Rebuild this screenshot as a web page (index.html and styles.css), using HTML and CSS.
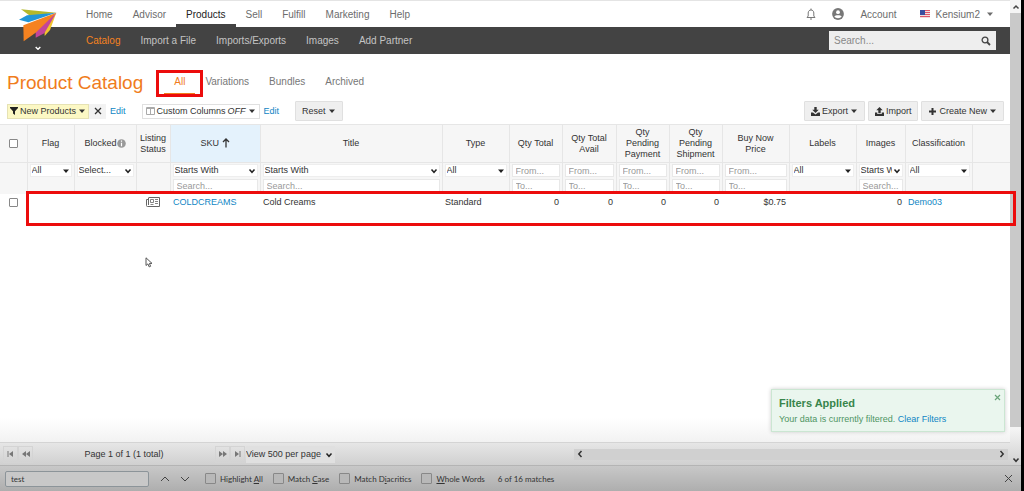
FILE: index.html
```html
<!DOCTYPE html>
<html lang="en">
<head>
<meta charset="utf-8">
<title>Product Catalog</title>
<link rel="stylesheet" href="styles.css">
</head>
<body>
<svg class="defs" width="0" height="0" aria-hidden="true">
  <symbol id="chev" viewBox="0 0 8 8"><path d="M1.5 2.5 4 5.3 6.5 2.5" fill="none" stroke="currentColor" stroke-width="1.5"/></symbol>
  <symbol id="tri" viewBox="0 0 8 8"><path d="M1 2.5h6L4 6z" fill="currentColor"/></symbol>
</svg>
<div class="window">
  <div class="viewport">
    <div class="app">
      <header class="header">
        <a class="logo" href="#" aria-label="Home">
          <svg viewBox="0 0 114 126" width="38" height="42">
            <path d="M6 4 112 14 34 24z" fill="#b3b82c"/>
            <path d="M0 35 24 22 112 14 28 43z" fill="#2196d8"/>
            <path d="M76 60 112 14 93 66 77 84z" fill="#f2c42c"/>
            <path d="M50 62 112 14 76 76 50 89z" fill="#c2459a"/>
            <path d="M13 52 112 14 50 74 14 100z" fill="#f58220"/>
            <path d="M50 117l7 7 7-7" fill="none" stroke="#fff" stroke-width="4"/>
          </svg>
        </a>
        <div class="bars">
          <div class="bar top">
            <nav class="nav">
              <a href="#">Home</a><a href="#">Advisor</a><a href="#" class="current">Products</a><a href="#">Sell</a><a href="#">Fulfill</a><a href="#">Marketing</a><a href="#">Help</a>
            </nav>
            <div class="user">
              <button type="button" aria-label="Notifications"><svg width="10" height="12" viewBox="0 0 10 12" fill="none" stroke="#777"><path d="M1 9.5h8L7.800 8V5c0-2-1.300-3-2.800-3S2.200 3 2.200 5v3zM5 .5V2M4 11h2"/></svg></button>
              <button type="button" aria-label="Profile"><svg width="12" height="12" viewBox="0 0 12 12"><circle cx="6" cy="6" r="5.900" fill="#777"/><circle cx="6" cy="4.200" r="1.900" fill="#fff"/><path d="M2.300 8.500C3.300 6.700 8.700 6.700 9.700 8.500 8 10.800 4 10.800 2.300 8.500z" fill="#fff"/></svg></button>
              <a href="#" class="account">Account</a>
              <button type="button" class="tenant"><svg width="10" height="8" viewBox="0 0 10 8"><path fill="#f2dede" d="M0 0h10v8H0z"/><path d="M0 .5h10M0 2.500h10M0 4.500h10M0 6.500h10" stroke="#e0566a"/><path fill="#3a4fa0" d="M0 0h5v5H0z"/></svg>Kensium2<svg width="8" height="8"><use href="#tri"/></svg></button>
            </div>
          </div>
          <div class="bar sub">
            <nav class="nav">
              <a href="#" class="current">Catalog</a><a href="#">Import a File</a><a href="#">Imports/Exports</a><a href="#">Images</a><a href="#">Add Partner</a>
            </nav>
            <form class="search"><input type="text" aria-label="Search" placeholder="Search..."><button type="button" aria-label="Search"><svg width="10" height="10" viewBox="0 0 10 10" fill="none" stroke="#444"><circle cx="4" cy="4" r="2.900" stroke-width="1.300"/><path d="m6 6 3 3" stroke-width="1.800"/></svg></button></form>
          </div>
        </div>
      </header>

      <div class="title-row">
        <h1>Product Catalog</h1>
        <nav class="tabs"><a href="#" class="current">All</a><a href="#">Variations</a><a href="#">Bundles</a><a href="#">Archived</a></nav>
      </div>

      <div class="toolbar">
        <div class="chip">
          <button type="button" class="filter"><svg width="8" height="8" viewBox="0 0 8 8"><path d="M0 0h8v1L5 4.300V8L3 6.500V4.300L0 1z" fill="#222"/></svg>New Products<svg width="8" height="8"><use href="#tri"/></svg></button><button type="button" class="clear" aria-label="Remove filter"><svg width="8" height="8" viewBox="0 0 8 8"><path d="m1 1 6 6M7 1 1 7" stroke="#333" stroke-width="1.300"/></svg></button>
        </div>
        <a href="#" class="edit">Edit</a>
        <button type="button" class="columns"><svg width="9" height="8" viewBox="0 0 9 8"><path d="M.5.5h8v7h-8zM4.500 1v6M1 1.500h7" fill="none" stroke="#aaa"/></svg>Custom Columns <i>OFF</i><svg width="8" height="8"><use href="#tri"/></svg></button>
        <a href="#" class="edit">Edit</a>
        <button type="button" class="btn reset">Reset<svg width="8" height="8"><use href="#tri"/></svg></button>
        <div class="actions">
          <button type="button" class="btn"><svg width="9" height="9" viewBox="0 0 9 9" fill="#333"><path d="M3.300 0h2.400v2.800h2L4.500 6 1.300 2.800h2zM0 5.500h2l2.500 2 2.500-2h2V9H0z"/></svg>Export<svg width="8" height="8"><use href="#tri"/></svg></button>
          <button type="button" class="btn"><svg width="9" height="9" viewBox="0 0 9 9" fill="#333"><path d="M3.300 6.200h2.400V3.300h2L4.500 0 1.300 3.300h2zM0 5.500h2.300V7h4.400V5.500H9V9H0z"/></svg>Import</button>
          <button type="button" class="btn"><svg width="9" height="9" viewBox="0 0 9 9"><path d="M4.500 1v7M1 4.500h7" stroke="#333" stroke-width="2"/></svg>Create New<svg width="8" height="8"><use href="#tri"/></svg></button>
        </div>
      </div>

      <main class="grid">
        <table>
          <colgroup><col class="c27"><col class="c47"><col class="c62"><col class="c34"><col class="c90"><col class="c182"><col class="c67"><col class="c53"><col class="c54"><col class="c53"><col class="c53"><col class="c67"><col class="c67"><col class="c49"><col class="c67"><col></colgroup>
          <thead>
            <tr class="heads">
              <th><input type="checkbox" aria-label="Select all"></th>
              <th>Flag</th>
              <th>Blocked<svg width="9" height="9" viewBox="0 0 9 9"><circle cx="4.500" cy="4.500" r="4.300" fill="#999"/><path d="M4.500 1.500v1.300M4.500 3.800v3.400" stroke="#fff" stroke-width="1.200"/></svg></th>
              <th>Listing Status</th>
              <th class="sorted">SKU <svg width="8" height="10" viewBox="0 0 8 10"><path d="M4 9.500V1M1 4l3-3 3 3" fill="none" stroke="#333" stroke-width="1.300"/></svg></th>
              <th>Title</th><th>Type</th><th>Qty Total</th><th>Qty Total Avail</th><th>Qty Pending Payment</th><th>Qty Pending Shipment</th><th>Buy Now<br>Price</th><th>Labels</th><th>Images</th><th>Classification</th><th></th>
            </tr>
            <tr class="filters">
              <td></td>
              <td><div class="sel"><select aria-label="Flag"><option>All</option></select><svg width="8" height="8"><use href="#tri"/></svg></div></td>
              <td><div class="sel"><select aria-label="Blocked"><option>Select...</option></select><svg width="8" height="8"><use href="#chev"/></svg></div></td>
              <td></td>
              <td><div class="sel"><select aria-label="SKU match"><option>Starts With</option></select><svg width="8" height="8"><use href="#chev"/></svg></div><input type="text" aria-label="SKU" placeholder="Search..."></td>
              <td><div class="sel"><select aria-label="Title match"><option>Starts With</option></select><svg width="8" height="8"><use href="#chev"/></svg></div><input type="text" aria-label="Title" placeholder="Search..."></td>
              <td><div class="sel"><select aria-label="Type"><option>All</option></select><svg width="8" height="8"><use href="#tri"/></svg></div></td>
              <td><input type="text" aria-label="Qty total from" placeholder="From..."><input type="text" aria-label="Qty total to" placeholder="To..."></td>
              <td><input type="text" aria-label="Available from" placeholder="From..."><input type="text" aria-label="Available to" placeholder="To..."></td>
              <td><input type="text" aria-label="Pending payment from" placeholder="From..."><input type="text" aria-label="Pending payment to" placeholder="To..."></td>
              <td><input type="text" aria-label="Pending shipment from" placeholder="From..."><input type="text" aria-label="Pending shipment to" placeholder="To..."></td>
              <td><input type="text" aria-label="Price from" placeholder="From..."><input type="text" aria-label="Price to" placeholder="To..."></td>
              <td><div class="sel"><select aria-label="Labels"><option>All</option></select><svg width="8" height="8"><use href="#tri"/></svg></div></td>
              <td><div class="sel"><select aria-label="Images match"><option>Starts With</option></select><svg width="8" height="8"><use href="#chev"/></svg></div><input type="text" aria-label="Images" placeholder="Search..."></td>
              <td><div class="sel"><select aria-label="Classification"><option>All</option></select><svg width="8" height="8"><use href="#tri"/></svg></div></td>
              <td></td>
            </tr>
          </thead>
          <tbody>
            <tr>
              <td class="check"><input type="checkbox" aria-label="Select COLDCREAMS"></td>
              <td></td><td></td>
              <td class="status"><svg width="14" height="10" viewBox="0 0 14 10" fill="none" stroke="#666"><path d="M2.500.5h11v9h-12c-1 0-1-.5-1-1V2.500h2M2.500 1v7" /><path d="M4.500 2.500h3v3h-3zM9 2.500h3M9 4.500h3M9 6.500h3M4.500 7.500h3" stroke-width=".8"/></svg></td>
              <td><a href="#">COLDCREAMS</a></td><td>Cold Creams</td><td>Standard</td>
              <td class="num">0</td><td class="num">0</td><td class="num">0</td><td class="num">0</td><td class="num">$0.75</td><td></td><td class="num">0</td><td><a href="#">Demo03</a></td><td></td>
            </tr>
          </tbody>
        </table>
        <div class="row-mark"></div>
        <svg class="pointer" width="8" height="11" viewBox="0 0 8 11"><path d="M1 .8v7.700l1.900-1.600 1.300 3 1.400-.6-1.200-2.900H7z" fill="#fff" stroke="#555"/></svg>
        <aside class="toast" role="status">
          <h2>Filters Applied</h2>
          <p>Your data is currently filtered. <a href="#">Clear Filters</a></p>
          <button type="button" aria-label="Dismiss"><svg width="7" height="7" viewBox="0 0 7 7"><path d="m1 1 5 5M6 1 1 6" stroke="#6aa57a" stroke-width="1.200"/></svg></button>
        </aside>
      </main>

      <footer class="pager">
        <button type="button" aria-label="First page"><svg width="7" height="8" viewBox="0 0 7 8"><path d="M1 1v6" stroke="#777"/><path d="M6 1v6L2 4z" fill="#777"/></svg></button>
        <button type="button" aria-label="Previous page"><svg width="8" height="8" viewBox="0 0 8 8" fill="#777"><path d="M4 1v6L0 4zM8 1v6L4 4z"/></svg></button>
        <span class="count">Page 1 of 1 (1 total)</span>
        <button type="button" aria-label="Next page"><svg width="8" height="8" viewBox="0 0 8 8" fill="#777"><path d="M0 1v6l4-3zM4 1v6l4-3z"/></svg></button>
        <button type="button" aria-label="Last page"><svg width="7" height="8" viewBox="0 0 7 8"><path d="M6 1v6" stroke="#777"/><path d="M1 1v6l4-3z" fill="#777"/></svg></button>
        <div class="sel per-page"><select aria-label="Rows per page"><option>View 500 per page</option></select><svg width="8" height="8"><use href="#chev"/></svg></div>
        <div class="hscroll"><svg width="6" height="8" viewBox="0 0 6 8"><path d="M4.500 1 1.800 4l2.700 3" fill="none" stroke="#333" stroke-width="1.500"/></svg><svg width="6" height="8" viewBox="0 0 6 8"><path d="M1.500 1l2.700 3-2.700 3" fill="none" stroke="#333" stroke-width="1.500"/></svg></div>
      </footer>
    </div>
    <div class="vscroll">
      <svg width="8" height="8" viewBox="0 0 8 8"><path d="M1.500 5.500 4 3l2.500 2.500" fill="none" stroke="#444" stroke-width="1.500"/></svg>
      <div class="thumb"></div>
      <svg width="8" height="8"><use href="#chev"/></svg>
    </div>
  </div>

  <form class="find">
    <input type="text" aria-label="Find in page" value="test">
    <button type="button" aria-label="Previous match"><svg width="10" height="8" viewBox="0 0 10 8"><path d="M1 6l4-4 4 4" fill="none" stroke="#444"/></svg></button>
    <button type="button" aria-label="Next match"><svg width="10" height="8" viewBox="0 0 10 8"><path d="M1 2l4 4 4-4" fill="none" stroke="#444"/></svg></button>
    <label><input type="checkbox"><span>Highlight <u>A</u>ll</span></label>
    <label><input type="checkbox"><span>Match <u>C</u>ase</span></label>
    <label><input type="checkbox"><span>Match D<u>i</u>acritics</span></label>
    <label><input type="checkbox"><span><u>W</u>hole Words</span></label>
    <span class="matches">6 of 16 matches</span>
    <button type="button" class="close" aria-label="Close find bar"><svg width="9" height="9" viewBox="0 0 9 9"><path d="m1 1 7 7M8 1 1 8" stroke="#444"/></svg></button>
  </form>
</div>
</body>
</html>
```

FILE: styles.css
```css
* { box-sizing: border-box; }
body { margin: 0; background: #000; color: #333; font: 9px/11px "Liberation Sans", Arial, sans-serif; }
a { color: #0f86c4; text-decoration: none; }
button, input, select { font: inherit; color: inherit; margin: 0; padding: 0; border: 0; background: none; border-radius: 0; }
button { display: inline-flex; align-items: center; justify-content: center; white-space: nowrap; }
svg { flex: none; }
.defs { position: absolute; }
input::placeholder { color: #999; opacity: 1; }

.window { display: flex; flex-direction: column; min-height: 100vh; margin-right: 3px; background: #fff; }
.viewport { flex: 1; display: flex; }
.app { flex: 1; min-width: 0; display: flex; flex-direction: column; }

/* Header */
.header { position: relative; font-size: 10px; border-top: 1px solid #e4e4e4; }
.logo { position: absolute; left: 19px; top: 7px; z-index: 1; }
.bar { display: flex; align-items: center; justify-content: space-between; padding-left: 76px; }
.bar.top { height: 26px; }
.bar.sub { height: 27px; padding-right: 14px; background: #434343; }
.nav { display: flex; align-self: stretch; }
.nav a { display: flex; align-items: center; padding: 0 10px; color: #6c6c6c; }
.top .nav .current { color: #222; border-bottom: 3px solid #434343; padding-top: 3px; }
.sub .nav a { color: #c4c4c4; }
.sub .nav .current { color: #f58220; }
.user { display: flex; align-items: center; gap: 16px; padding-right: 16px; color: #6c6c6c; }
.user .account { color: #6c6c6c; }
.tenant { gap: 6px; margin-left: 7px; }
.search { display: flex; align-items: center; width: 167px; height: 19px; padding: 0 5px; background: #eee; }
.search input { flex: 1; min-width: 0; }
.search input::placeholder { color: #888; }

/* Title and tabs */
.title-row { display: flex; align-items: center; height: 46px; padding: 11px 7px 0; }
h1 { margin: 0 21px 0 0; font-size: 19px; line-height: 22px; font-weight: 400; color: #f07c1c; }
.tabs { display: flex; font-size: 10px; }
.tabs a { position: relative; padding: 5px 10px; line-height: 12px; color: #777; }
.tabs .current { color: #f07c1c; border-bottom: 1px solid #f07c1c; }
.tabs .current::after { content: ""; position: absolute; inset: -1px -8px -4px -8px; border: 3px solid #ec0c0c; }

/* Toolbar */
.toolbar { display: flex; align-items: center; padding: 1px 6px 3px 7px; }
.chip { display: flex; height: 15px; }
.chip .filter { gap: 2px; padding: 0 2px; background: #fcf8c4; border: 1px solid #e6e2b4; }
.chip .clear { width: 17px; background: #f2f2f2; }
.edit { margin-left: 4px; }
.columns { gap: 2px; height: 15px; margin-left: 16px; padding: 0 3px; border: 1px solid #e0e0e0; }
.btn { gap: 2px; height: 20px; padding: 0 6px; background: #efefef; border: 1px solid #e0e0e0; border-radius: 1px; }
.reset { margin-left: 16px; }
.actions { display: flex; gap: 3px; margin-left: auto; }

/* Grid */
.grid { position: relative; flex: 1; background: linear-gradient(to top, #f2f2f2, #fff 24px); }
table { width: 100%; table-layout: fixed; border-collapse: collapse; }
.c27 { width: 27px; } .c34 { width: 34px; } .c47 { width: 47px; } .c49 { width: 49px; }
.c53 { width: 53px; } .c54 { width: 54px; } .c62 { width: 62px; } .c67 { width: 67px; }
.c90 { width: 90px; } .c182 { width: 182px; }
th, .filters td { background: #f6f6f6; border: 1px solid #e6e6e6; border-bottom: 0; }
th:first-child, .filters td:first-child { border-left: 0; }
th:last-child, .filters td:last-child { border-right: 0; }
th { height: 38px; padding: 0 2px; font-weight: 400; }
th.sorted { background: #e4f2fc; }
th svg { vertical-align: -2px; }
.filters td { height: 31px; padding: 1px 2px; vertical-align: top; }
.filters input { display: block; width: 100%; height: 13px; padding: 0 3px; background: #fff; border: 1px solid #e8e8e8; }
.filters td > * + * { margin-top: 2px; }
.sel { position: relative; }
.sel select { display: block; width: 100%; height: 13px; padding: 0 10px 0 1px; appearance: none; background: #fff; border: 1px solid #eee; }
.sel svg { position: absolute; right: 2px; top: 3px; color: #222; pointer-events: none; }
tbody td { height: 32px; padding: 3px; vertical-align: top; }
tbody .num { text-align: right; }
tbody .status { text-align: center; }
.grid [type="checkbox"], .find [type="checkbox"] { appearance: none; display: block; width: 9px; height: 9px; margin: 0 auto; background: #fff; border: 1px solid #888; border-radius: 1px; }
tbody .check { padding-top: 4px; }
.row-mark { position: absolute; top: 67px; left: 26px; right: -6px; height: 35px; border: 3px solid #ec0c0c; z-index: 2; }
.pointer { position: absolute; left: 145px; top: 133px; }
.toast { position: absolute; right: 5px; bottom: 10px; width: 234px; padding: 7px 7px 6px; background: #eaf6ee; border: 1px solid #cbe6d2; box-shadow: 0 0 4px #ccc; color: #4f9563; }
.toast h2 { margin: 0 0 4px; font-size: 11px; line-height: 13px; color: #38854b; }
.toast p { margin: 0; }
.toast button { position: absolute; right: 3px; top: 4px; }

/* Pager */
.pager { display: flex; align-items: center; height: 23px; padding: 0 2px 0 3px; background: linear-gradient(#e6e6e6, #d0d0d0); border-top: 1px solid #d4d4d4; }
.pager > button { width: 15px; height: 17px; border: 1px solid #d4d4d4; }
.count { flex: 0 0 182px; text-align: center; }
.per-page { margin-left: 1px; width: 89px; }
.per-page select { height: 17px; padding: 0; background: #e0e0e0; border: 0; }
.per-page svg { top: 5px; }
.hscroll { display: flex; align-items: center; justify-content: space-between; width: 434px; height: 11px; margin-left: auto; padding: 0 3px; background: #d0d0d0; }

/* Page scrollbar */
.vscroll { display: flex; flex-direction: column; align-items: center; width: 11px; padding: 3px 0 1px; background: linear-gradient(to top, #d0d0d0, #f4f4f4 36px); }
.thumb { flex: 1; align-self: stretch; margin: 2px 0 29px; background: #c9c9c9; }

/* Find bar */
.find { display: flex; align-items: center; height: 26px; padding: 0 8px 0 5px; background: linear-gradient(#c8c8c8, #aeaeae); border-top: 1px solid #b4b4b4; font: 8px/10px Lato, "Noto Sans", sans-serif; }
.find [type="text"] { width: 144px; height: 16px; margin-right: 6px; padding: 0 5px; background: #c8c8c8; border: 1px solid #8c9499; border-radius: 2px; }
.find button { width: 20px; height: 16px; }
.find label { display: flex; align-items: center; gap: 4px; margin-left: 10px; }
.find [type="checkbox"] { width: 11px; height: 11px; background: #b8b8b8; }
.matches { margin-left: 13px; }
.find .close { width: 9px; margin-left: auto; }
```
